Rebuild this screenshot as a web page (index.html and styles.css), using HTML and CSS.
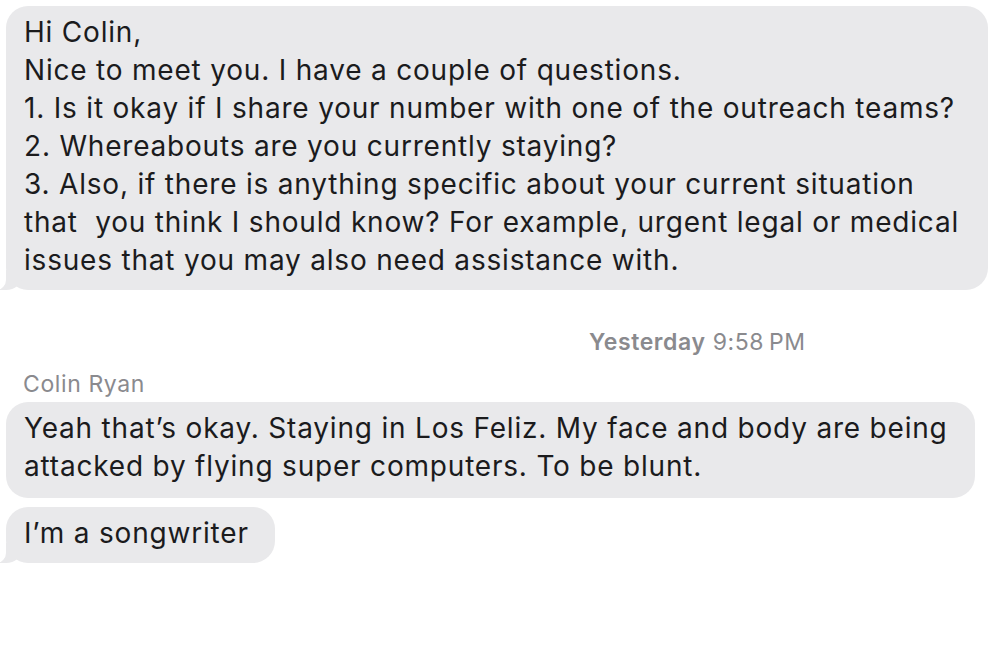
FILE: index.html
```html
<!DOCTYPE html>
<html>
<head>
<meta charset="utf-8">
<link rel="stylesheet" href="styles.css">
</head>
<body>
<div class="thread">
  <div class="bubble b1 tail">Hi Colin,<br>Nice to meet you. I have a couple of questions.<br>1. Is it okay if I share your number with one of the outreach teams?<br>2. Whereabouts are you currently staying?<br>3. Also, if there is anything specific about your current situation<br>that &nbsp;you think I should know? For example, urgent legal or medical<br>issues that you may also need assistance with.</div>
  <div class="stamp"><span class="day">Yesterday</span> 9:58&#8201;PM</div>
  <div class="sender">Colin Ryan</div>
  <div class="bubble b2">Yeah that’s okay. Staying in Los Feliz. My face and body are being<br>attacked by flying super computers. To be blunt.</div>
  <div class="bubble b3 tail">I’m a songwriter</div>
</div>
</body>
</html>
```
FILE: styles.css
```css
html, body {
  margin: 0;
  padding: 0;
  background: #ffffff;
}
body {
  width: 1006px;
  height: 656px;
  overflow: hidden;
  font-family: Inter, "Liberation Sans", Arial, sans-serif;
  color: #1b1b1d;
}
.thread {
  display: flex;
  flex-direction: column;
  align-items: flex-start;
  padding: 6px 0 0 6px;
}
.bubble {
  position: relative;
  box-sizing: border-box;
  background: #e9e9eb;
  border-radius: 22px;
  font-size: 28px;
  letter-spacing: 0.8px;
  line-height: 38px;
  padding: 7px 20px 11px 18px;
  white-space: nowrap;
}
.b1 { width: 982px; }
.b2 { width: 969px; margin-top: 4px; padding-bottom: 13px; }
.b3 { width: 269px; margin-top: 9px; }
.tail::before {
  content: "";
  position: absolute;
  left: -6px;
  bottom: 0;
  width: 22px;
  height: 20px;
  background: #e9e9eb;
  border-bottom-right-radius: 16px 14px;
}
.tail::after {
  content: "";
  position: absolute;
  left: -12px;
  bottom: 0;
  width: 12px;
  height: 20px;
  background: #ffffff;
  border-bottom-right-radius: 10px;
}
.stamp {
  margin: 38px 0 0 583px;
  font-size: 23px;
  letter-spacing: 0.6px;
  line-height: 28px;
  color: #8a8a8e;
}
.day { font-weight: 600; }
.sender {
  margin: 14px 0 0 17px;
  font-size: 23px;
  letter-spacing: 0.6px;
  line-height: 28px;
  color: #8a8a8e;
}
```
